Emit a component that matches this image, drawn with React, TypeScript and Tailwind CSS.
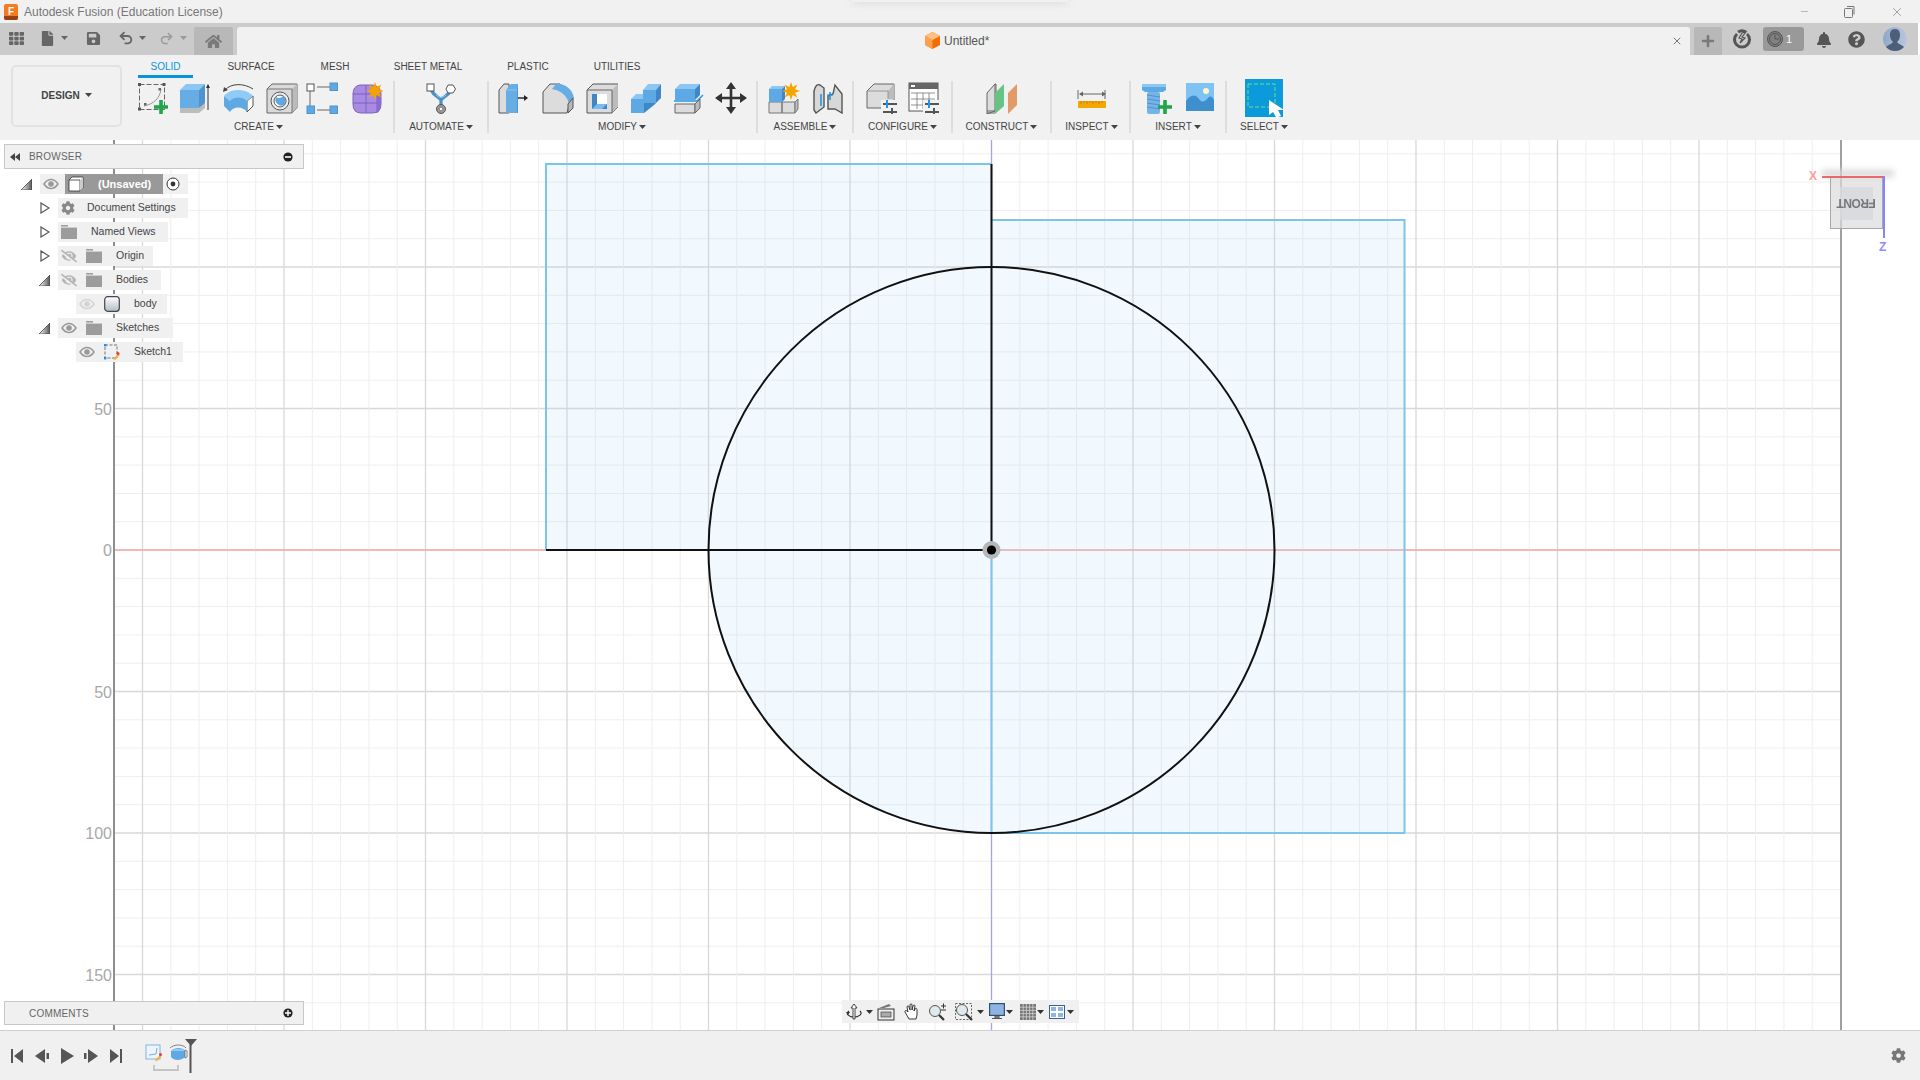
import React from "react";
import { FaBell, FaCog, FaEyeSlash, FaFile, FaHome, FaPlus, FaQuestionCircle, FaSave, FaTh } from "react-icons/fa";
import { Undo2, Redo2, X, Minus } from "lucide-react";

const Caret = ({ c = "#444" }: { c?: string }) => (
  <svg width="7" height="4" viewBox="0 0 7 4" className="shrink-0"><path d="M0 0h7L3.5 4z" fill={c} /></svg>
);

const I = ({ children, w = 32, h = 32 }: { children: React.ReactNode; w?: number; h?: number }) => (
  <svg width={w} height={h} viewBox={`0 0 ${w} ${h}`} className="shrink-0">{children}</svg>
);

const star = (cx: number, cy: number, r: number) => {
  const pts: string[] = [];
  for (let i = 0; i < 16; i++) {
    const a = (i * Math.PI) / 8;
    const rr = i % 2 === 0 ? r : r * 0.48;
    pts.push(`${(cx + rr * Math.sin(a)).toFixed(1)},${(cy - rr * Math.cos(a)).toFixed(1)}`);
  }
  return <polygon points={pts.join(" ")} fill="#f5a300" />;
};

const GreenPlus = ({ x, y, s = 14 }: { x: number; y: number; s?: number }) => (
  <path d={`M${x - s / 2} ${y}h${s}M${x} ${y - s / 2}v${s}`} stroke="#1fa64a" strokeWidth="3.6" />
);

const SketchIcon = () => (
  <I>
    <rect x="2.500" y="2.500" width="25" height="25" fill="none" stroke="#666" strokeWidth="1" strokeDasharray="5 2" />
    <path d="M7 24C17 22 23 16 24 7" fill="none" stroke="#999" strokeWidth="1" />
    {[[1, 1], [25.5, 1], [1, 25.5]].map(([x, y]) => <rect key={x * 10 + y} x={x} y={y} width="3" height="3" fill="#555" />)}
    <rect x="7" y="21" width="2.500" height="2.500" fill="#666" />
    <rect x="21.500" y="6" width="2.500" height="2.500" fill="#666" />
    <GreenPlus x={24} y={25} />
  </I>
);
const ExtrudeIcon = () => (
  <I>
    <path d="M1 26h19l6-5v5l-6 5H1z" fill="#bcbcbc" />
    <path d="M1 8h19v18H1z" fill="#66ade6" />
    <path d="M1 8l6-6h19l-6 6z" fill="#8cc6f2" />
    <path d="M20 8l6-6v19l-6 5z" fill="#4f93cf" />
    <path d="M29 28V3" stroke="#333" strokeWidth="1" />
    <path d="M27 6l2-4 2 4z" fill="#333" />
  </I>
);
const RevolveIcon = () => (
  <I>
    <path d="M2 8C8 1 21 1 30 7" fill="none" stroke="#444" strokeWidth="1" />
    <path d="M0 10l1-5 4 3z" fill="#444" />
    <path d="M24 19l6-5v10l-6 6z" fill="#fff" stroke="#555" strokeWidth="1" />
    <path d="M1 14C7 6 23 6 30 14l-6 5C20 14 10 14 7 19z" fill="#8fcbf6" />
    <path d="M7 19C10 14 20 14 24 19v11C20 24 10 24 7 30l-6-6V14z" fill="#5ea8e4" />
  </I>
);
const HoleIcon = () => (
  <I>
    <path d="M1 7l5-5h25v24l-5 5H1z" fill="#dadada" stroke="#666" strokeWidth="1" />
    <path d="M26 7l5-5v24l-5 5z" fill="#bbb" />
    <path d="M1 7h25v24" fill="none" stroke="#777" strokeWidth="1" />
    <circle cx="14" cy="19" r="9" fill="#eee" stroke="#555" strokeWidth="1" />
    <circle cx="14" cy="19" r="6" fill="#fff" stroke="#555" strokeWidth="1" />
    <path d="M10 15a6 6 0 0 0 8 8 6 6 0 0 0 -1-9 5 5 0 0 1-7 1z" fill="#5ea8e4" />
  </I>
);
const PatternIcon = () => (
  <I>
    <path d="M11 5h13M4 9v15M11 28h13" stroke="#666" strokeWidth="1" />
    <rect x="1" y="2" width="7" height="7" fill="#fff" stroke="#555" />
    <rect x="24" y="1" width="7.5" height="7.5" fill="#5ea8e4" stroke="#4f93cf" />
    <rect x="1" y="24" width="7.5" height="7.5" fill="#5ea8e4" stroke="#4f93cf" />
    <rect x="24" y="24" width="7.5" height="7.5" fill="#5ea8e4" stroke="#4f93cf" />
  </I>
);
const FormIcon = () => (
  <I>
    <path d="M2 12Q2 4 9 3h12q9 1 9 9v10q0 9-9 9H10q-8 0-8-9z" fill="#a98ce2" stroke="#7e5fc4" strokeWidth="1" />
    <path d="M2 12h26M2 21h24M15 3v28M26 12v19" stroke="#7e5fc4" strokeWidth="1" fill="none" />
    <path d="M26 10l4 2v11q0 5-4 8z" fill="#8a6bd0" />
    {star(24, 9, 9)}
  </I>
);
const AutomateIcon = () => (
  <I w={34}>
    <path d="M7 8c3 6 8 7 10 10M27 8c-3 6-8 7-10 10M17 16v9" stroke="#4a8fc8" strokeWidth="3.2" fill="none" />
    <path d="M12 13c3 3 7 3 10 0" stroke="#9ac8ea" strokeWidth="1" fill="none" />
    <rect x="3" y="2" width="7" height="7" fill="#fff" stroke="#555" />
    <path d="M24 3l5 0 2.5 4-2.5 4-5 0-2-4z" fill="#fff" stroke="#555" />
    <circle cx="17" cy="27" r="4.5" fill="#9a9a9a" stroke="#555" />
    <circle cx="17" cy="27" r="1.8" fill="#fff" stroke="#555" strokeWidth=".6" />
  </I>
);
const PressPullIcon = () => (
  <I>
    <path d="M1 8l5-6h5v29H1z" fill="#dcdcdc" stroke="#555" strokeWidth="1" />
    <path d="M8 8l5-6h7v29H8z" fill="#66ade6" />
    <path d="M20 2l-1 7v22h1z" fill="#4f93cf" />
    <path d="M8 8h11" stroke="#8cc6f2" strokeWidth="1" />
    <path d="M20 16h8" stroke="#222" strokeWidth="1.4" />
    <path d="M26 13l4 3-4 3z" fill="#222" />
  </I>
);
const FilletIcon = () => (
  <I>
    <path d="M1 10l7-8h10l12 12-1 3-4 14H1z" fill="#dcdcdc" stroke="#555" strokeWidth="1" />
    <path d="M14 2h5C26 4 31 9 32 16l-5 6c-1-6-6-12-13-14l-4-1z" fill="#66ade6" />
    <path d="M26 22l5-6v10l-5 5z" fill="#b8b8b8" stroke="#555" strokeWidth="1" />
  </I>
);
const ShellIcon = () => (
  <I>
    <path d="M1 8l6-6h25v23l-6 6H1z" fill="#dcdcdc" stroke="#555" strokeWidth="1" />
    <path d="M26 8l6-6v23l-6 6z" fill="#bcbcbc" />
    <path d="M1 8h25v23" fill="none" stroke="#666" strokeWidth="1" />
    <rect x="6" y="12" width="15" height="15" fill="#fff" />
    <path d="M6 12h5v10h10v5H6z" fill="#3f86c6" />
    <path d="M11 22h10l-5 5H6z" fill="#78bcf0" />
  </I>
);
const CombineIcon = () => (
  <I>
    <path d="M13 8l5-6h13l-5 6z" fill="#8cc6f2" />
    <path d="M13 8h13v13H14v10H1V17h12z" fill="#5ea8e4" />
    <path d="M26 8l5-6v14l-5 5z" fill="#3f86c6" />
    <path d="M1 17l5-5h7v5z" fill="#8cc6f2" />
    <path d="M14 21h12l5-5-7 7-10 8z" fill="#3f86c6" />
  </I>
);
const OffsetIcon = () => (
  <I>
    <path d="M3 7l5-5h20l-5 5z" fill="#8cc6f2" />
    <path d="M3 7h20v11H3z" fill="#5ea8e4" />
    <path d="M23 7l5-5v11l-5 5z" fill="#3f86c6" />
    <path d="M2 19h23l6-6" stroke="#2196e8" strokeWidth="1.4" fill="none" />
    <path d="M3 22h20v9H3z" fill="#dcdcdc" stroke="#666" strokeWidth="1" />
    <path d="M23 22l5-5v9l-5 5z" fill="#bcbcbc" stroke="#666" strokeWidth="1" />
  </I>
);
const MoveIcon = () => (
  <I>
    <path d="M16 4v24M4 16h24" stroke="#333" strokeWidth="2.6" />
    <path d="M16 0l5 7H11zM16 32l5-7H11zM0 16l7-5v10zM32 16l-7-5v10z" fill="#333" />
  </I>
);
const ComponentIcon = () => (
  <I>
    <path d="M1 20h13v11H1zM14 20h13v11H14z" fill="#dcdcdc" stroke="#777" strokeWidth="1" />
    <path d="M27 20l3-3v10l-3 4z" fill="#bcbcbc" stroke="#777" strokeWidth="1" />
    <path d="M1 7h13v13H1z" fill="#5ea8e4" />
    <path d="M1 7l3-3h13l-3 3z" fill="#8cc6f2" />
    <path d="M14 7l3-3v13l-3 3z" fill="#3f86c6" />
    {star(23, 9, 9)}
  </I>
);
const JointIcon = () => (
  <I>
    <path d="M2 9Q4 1 8 3l4 3v19l-8 6-2-3z" fill="#d8d8d8" stroke="#555" strokeWidth="1.4" />
    <path d="M16 14l5-2 2-9 7 9v19l-7-4h-7z" fill="#d8d8d8" stroke="#555" strokeWidth="1.4" />
    <path d="M9 12v12M18 10v8" stroke="#2196e8" strokeWidth="1.6" />
    <path d="M15 13h6" stroke="#2196e8" strokeWidth="1.2" />
  </I>
);
const Sliders = ({ x = 18, y = 22 }: { x?: number; y?: number }) => (
  <g>
    <path d={`M${x} ${y}h14M${x} ${y + 8}h14`} stroke="#555" strokeWidth="1.8" />
    <path d={`M${x + 4} ${y - 4}v8`} stroke="#2196e8" strokeWidth="2" />
    <path d={`M${x + 9} ${y + 4}v8`} stroke="#555" strokeWidth="2" />
  </g>
);
const ConfigCubeIcon = () => (
  <I>
    <path d="M1 9l7-7h20v24H1z" fill="#dcdcdc" stroke="#666" strokeWidth="1" />
    <path d="M22 9l6-7v15h-6z" fill="#bcbcbc" />
    <path d="M1 9h21v8" fill="none" stroke="#888" strokeWidth=".8" />
    <rect x="15" y="18" width="17" height="14" fill="#f1f1f1" />
    <Sliders x={17} y={22} />
  </I>
);
const ConfigTableIcon = () => (
  <I>
    <rect x="1" y="1" width="29" height="28" fill="#fff" stroke="#555" strokeWidth="1" />
    <rect x="1" y="1" width="29" height="6" fill="#666" />
    <rect x="3" y="3" width="4" height="2" fill="#fff" />
    <path d="M3 11h24M3 17h24M3 23h24M9 11v16M15 11v16M21 11v16" stroke="#777" strokeWidth=".8" />
    <rect x="15" y="18" width="17" height="14" fill="#f1f1f1" />
    <Sliders x={17} y={22} />
  </I>
);
const ConstructIcon = () => (
  <I>
    <path d="M1 11l8-9v27l-8 3z" fill="#dcdcdc" stroke="#666" strokeWidth="1" />
    <path d="M9 2h1v27H1" fill="none" stroke="#666" strokeWidth="1" />
    <path d="M9 11l0 21 9-8V2z" fill="#65c383" />
    <path d="M22 11l9-9v21l-9 9z" fill="#e29a68" />
    <path d="M1 31h8" stroke="#666" strokeWidth="1" />
  </I>
);
const InspectIcon = () => (
  <I>
    <path d="M5 8v9M32 8v9" stroke="#666" strokeWidth="1" transform="translate(-2 0)" />
    <path d="M5 12h25" stroke="#666" strokeWidth="1" />
    <path d="M4 12l4-2.5v5zM31 12l-4-2.5v5z" fill="#666" />
    <rect x="3" y="19" width="28" height="7" fill="#f7a600" />
    <path d="M6 19v3M9 19v2M12 19v3M15 19v2M18 19v3M21 19v2M24 19v3M27 19v2" stroke="#a87000" strokeWidth=".7" />
  </I>
);
const BoltIcon = () => (
  <I>
    <path d="M0 2h24v6l-3 2H3l-3-2z" fill="#5ea8e4" />
    <rect x="0" y="2" width="24" height="3" fill="#8cc6f2" />
    <rect x="5" y="10" width="13" height="22" rx="2" fill="#76b4e6" />
    <path d="M5 13l13 2M5 17l13 2M5 21l13 2M5 25l13 2" stroke="#4f93cf" strokeWidth="1.2" />
    <GreenPlus x={23} y={25} />
  </I>
);
const PictureIcon = () => (
  <I w={30}>
    <rect x="1" y="1" width="28" height="28" fill="#7fc2f4" />
    <path d="M1 29V19c4-6 9-8 13-2 3 4 6 3 9-1 3-3 4-1 6 2v11z" fill="#3f8fcc" />
    <circle cx="21" cy="9" r="3" fill="#fff7c8" />
  </I>
);
const SelectIcon = () => (
  <I w={38} h={38}>
    <rect width="38" height="38" fill="#0b9ada" />
    <rect x="3" y="5" width="27" height="23" fill="none" stroke="#6fe08e" strokeWidth="1" strokeDasharray="4 2" />
    <path d="M24 21l0 15 4-3 3 5h2l3-1-3-6h6z" fill="#fff" />
  </I>
);

const Slot = ({ className, children }: { className: string; children: React.ReactNode }) => (
  <div className={`${className} flex justify-center items-center shrink-0`}>{children}</div>
);

const Group = ({ className, label, labelClass = "", iconsClass = "justify-center", children }: { className: string; label: string; labelClass?: string; iconsClass?: string; children: React.ReactNode }) => (
  <div className={`${className} shrink-0 flex flex-col`}>
    <div className={`h-[40px] flex items-center ${iconsClass}`}>{children}</div>
    <div className={`h-[18px] flex items-center justify-center gap-[2px] text-[10px] leading-none text-[#444] ${labelClass}`}>
      <span>{label}</span><Caret />
    </div>
  </div>
);
const Sep = () => <div className="w-[2px] h-[52px] mt-[3px] bg-[#dddddd] shrink-0" />;

const Tab = ({ className, children }: { className: string; children: React.ReactNode }) => (
  <div className={`${className} h-[23px] pt-[6px] text-center text-[10px] leading-[12px] text-[#444] shrink-0`}>{children}</div>
);

const TitleBar = () => (
  <div className="relative h-[23px] bg-[#f1f1f1] flex items-center shrink-0 overflow-hidden">
    <svg width="14" height="16" viewBox="0 0 14 16" className="ml-[4px] shrink-0">
      <rect width="14" height="16" rx="2" fill="#f47b20" />
      <path d="M0 12h14v2a2 2 0 0 1-2 2H2a2 2 0 0 1-2-2z" fill="#9a3f12" />
      <text x="7" y="10.5" textAnchor="middle" fontSize="10" fontWeight="700" fill="#fff" fontFamily="Liberation Sans, sans-serif">F</text>
    </svg>
    <span className="ml-[6px] text-[12px] text-[#777]">Autodesk Fusion (Education License)</span>
    <Minus size={11} strokeWidth={1} className="text-[#777] ml-[1576px] shrink-0" />
    <svg width="11" height="12" viewBox="0 0 11 12" className="ml-[34px] shrink-0"><rect x=".5" y="2.5" width="8" height="9" rx="1" fill="none" stroke="#777" /><path d="M3 .5h7v8" fill="none" stroke="#777" /></svg>
    <X size={14} strokeWidth={1} className="text-[#666] ml-[35px] shrink-0" />
    <div className="absolute left-[852px] -top-[8px] w-[216px] h-[10px] shadow-[0_2px_8px_rgba(0,0,0,0.08)]" />
  </div>
);

const TabBar = () => (
  <div className="h-[32px] bg-[#cbcbcb] flex shrink-0 w-[1918px] text-[#666]">
    <div className="h-[24px] mt-[3px] flex items-center">
      <FaTh size={15} className="ml-[9px] shrink-0" />
      <FaFile size={15} className="ml-[16px] shrink-0" />
      <div className="ml-[6px]"><Caret c="#666" /></div>
      <FaSave size={15} className="ml-[18px] shrink-0" />
      <Undo2 size={16} strokeWidth={2.8} className="ml-[17px] shrink-0" />
      <div className="ml-[5px]"><Caret c="#666" /></div>
      <Redo2 size={15} strokeWidth={2.4} className="ml-[13px] shrink-0 text-[#999]" />
      <div className="ml-[6px]"><Caret c="#999" /></div>
    </div>
    <div className="ml-[7px] mt-[4px] w-[39px] h-[28px] bg-[#b8b8b8] rounded-t-[2px] flex items-center justify-center shrink-0">
      <FaHome size={17} className="text-[#7a7a7a]" />
    </div>
    <div className="ml-[4px] mt-[4px] w-[1453px] h-[28px] bg-[#f1f1f1] rounded-t-[3px] flex items-center pb-[1px] shrink-0">
      <svg width="15" height="17" viewBox="0 0 15 17" className="ml-[688px] shrink-0">
        <path d="M7.5 0L15 4v9l-7.5 4L0 13V4z" fill="#f36d00" />
        <path d="M7.5 0L15 4l-7.5 4L0 4z" fill="#ffc088" />
        <path d="M0 4l7.5 4v9L0 13z" fill="#ffa04c" />
      </svg>
      <span className="ml-[4px] text-[12px] text-[#555]">Untitled*</span>
      <X size={12} strokeWidth={1.6} className="ml-[682px] shrink-0 text-[#555]" />
    </div>
    <div className="ml-[4px] mt-[4px] w-[28px] h-[28px] bg-[#b8b8b8] rounded-t-[2px] flex items-center justify-center shrink-0">
      <FaPlus size={14} className="text-[#7a7a7a]" />
    </div>
    <svg width="18" height="20" viewBox="0 0 18 20" className="ml-[11px] mt-[6px] shrink-0">
      <path d="M4 5A7.5 7.5 0 1 0 14 5" fill="none" stroke="#555" strokeWidth="3" />
      <path d="M5 3a7.5 7.5 0 0 1 8 0" fill="none" stroke="#555" strokeWidth="3" />
      <path d="M13 3l-4 5 3 1-5 5 2-4-3-1 3-5z" fill="#cbcbcb" stroke="#555" strokeWidth="1.2" />
    </svg>
    <div className="ml-[12px] mt-[4px] w-[41px] h-[24px] bg-[#999999] rounded-[3px] flex items-center shrink-0">
      <svg width="16" height="18" viewBox="0 0 16 18" className="ml-[4px] shrink-0">
        <circle cx="8" cy="9" r="7.5" fill="#808080" stroke="#555" />
        <circle cx="8" cy="9" r="5.5" fill="none" stroke="#555" />
        <path d="M8 5v4h4" fill="none" stroke="#555" />
      </svg>
      <span className="ml-[3px] text-[11px] text-white">1</span>
    </div>
    <FaBell size={16} className="ml-[12px] mt-[9px] shrink-0 text-[#555]" />
    <FaQuestionCircle size={17} className="ml-[16px] mt-[8px] shrink-0 text-[#555]" />
    <svg width="24" height="24" viewBox="0 0 24 24" className="ml-[18px] mt-[4px] shrink-0">
      <defs><linearGradient id="av" x1="0" x2="1"><stop offset="0" stopColor="#8fa8c8" /><stop offset="1" stopColor="#b8c8dc" /></linearGradient></defs>
      <ellipse cx="12" cy="12" rx="12" ry="12" fill="url(#av)" />
      <path d="M12 2c4 0 5 3 5 6s-1 5-3 7c1 2 5 3 7 5-3 3-6 4-9 4s-6-1-9-4c2-2 6-3 7-5-2-2-3-4-3-7s1-6 5-6z" fill="#4c5e78" />
    </svg>
  </div>
);

const Ribbon = () => (
  <div className="h-[85px] bg-[#f1f1f1] flex shrink-0">
    <div className="ml-[11px] mt-[10px] w-[111px] h-[62px] rounded-[5px] border-2 border-[#e2e2e2] flex items-center justify-center gap-[5px] pb-[2px] text-[10px] font-bold text-[#444] shrink-0">
      <span>DESIGN</span><Caret />
    </div>
    <div className="ml-[10px] flex flex-col w-[1170px]">
      <div className="flex h-[23px] pl-[6px]">
        <Tab className="w-[55px] border-b-[3px] border-[#0696d7] !text-[#0696d7]">SOLID</Tab>
        <Tab className="ml-[16px] w-[84px]">SURFACE</Tab>
        <Tab className="w-[84px]">MESH</Tab>
        <Tab className="w-[102px]">SHEET METAL</Tab>
        <Tab className="w-[98px]">PLASTIC</Tab>
        <Tab className="w-[80px]">UTILITIES</Tab>
      </div>
      <div className="flex">
        <Group className="w-[261px]" label="CREATE" labelClass="pr-[8px]" iconsClass="justify-start">
          <Slot className="w-[42px]"><SketchIcon /></Slot>
          <Slot className="w-[42px]"><ExtrudeIcon /></Slot>
          <Slot className="w-[46px]"><RevolveIcon /></Slot>
          <Slot className="w-[40px]"><HoleIcon /></Slot>
          <Slot className="w-[40px]"><PatternIcon /></Slot>
          <Slot className="w-[50px]"><FormIcon /></Slot>
        </Group>
        <Sep />
        <Group className="w-[92px]" label="AUTOMATE"><AutomateIcon /></Group>
        <Sep />
        <Group className="w-[267px]" label="MODIFY" labelClass="pr-[1px]" iconsClass="justify-start pl-[3px]">
          <Slot className="w-[44px]"><PressPullIcon /></Slot>
          <Slot className="w-[44px]"><FilletIcon /></Slot>
          <Slot className="w-[44px]"><ShellIcon /></Slot>
          <Slot className="w-[44px]"><CombineIcon /></Slot>
          <Slot className="w-[40px]"><OffsetIcon /></Slot>
          <Slot className="w-[46px]"><MoveIcon /></Slot>
        </Group>
        <Sep />
        <Group className="w-[94px]" label="ASSEMBLE" iconsClass="justify-start pl-[4px]">
          <Slot className="w-[44px]"><ComponentIcon /></Slot>
          <Slot className="w-[44px]"><JointIcon /></Slot>
        </Group>
        <Sep />
        <Group className="w-[97px]" label="CONFIGURE" iconsClass="justify-start pl-[7px]">
          <Slot className="w-[42px]"><ConfigCubeIcon /></Slot>
          <Slot className="w-[42px]"><ConfigTableIcon /></Slot>
        </Group>
        <Sep />
        <Group className="w-[97px]" label="CONSTRUCT"><ConstructIcon /></Group>
        <Sep />
        <Group className="w-[77px]" label="INSPECT" labelClass="pl-[2px]"><InspectIcon /></Group>
        <Sep />
        <Group className="w-[94px]" label="INSERT" iconsClass="justify-start pl-[6px]">
          <Slot className="w-[42px]"><BoltIcon /></Slot>
          <Slot className="w-[42px]"><PictureIcon /></Slot>
        </Group>
        <Sep />
        <Group className="w-[74px]" label="SELECT"><SelectIcon /></Group>
      </div>
    </div>
  </div>
);

const Scene = () => {
  const ox = 991.5, oy = 550, step = 28.3;
  const vs: number[] = [];
  const hs: number[] = [];
  for (let k = -31; k <= 30; k++) vs.push(k);
  for (let k = -14; k <= 16; k++) hs.push(k);
  return (
    <svg width="1920" height="890" viewBox="0 140 1920 890" className="absolute inset-0">
      {hs.map((k) => {
        const y = oy + k * step;
        return <line key={k} x1="114" x2="1840" y1={y} y2={y} stroke={k % 5 === 0 ? "#d8d8d8" : "#eeeeee"} strokeWidth={k % 5 === 0 ? 1.3 : 1} />;
      })}
      {vs.map((k) => {
        const x = ox + k * step;
        if (x < 115 || x > 1839) return null;
        return <line key={k} x1={x} x2={x} y1="140" y2="1030" stroke={k % 5 === 0 ? "#d8d8d8" : "#eeeeee"} strokeWidth={k % 5 === 0 ? 1.3 : 1} />;
      })}
      <line x1="114" x2="1840" y1="550" y2="550" stroke="#ff8d8d" strokeWidth="1.2" />
      <line x1="991.5" x2="991.5" y1="140" y2="1030" stroke="#a4a4ee" strokeWidth="1.2" />
      <line x1="114" x2="114" y1="140" y2="1030" stroke="#8e8e8e" strokeWidth="2" />
      <line x1="1841" x2="1841" y1="140" y2="1030" stroke="#a0a0a0" strokeWidth="2" />
      <rect x="546" y="164" width="445.5" height="386" fill="#a8d8fa" fillOpacity=".16" />
      <rect x="991.5" y="220" width="413" height="613" fill="#a8d8fa" fillOpacity=".16" />
      <path d="M708.5 550A283 283 0 0 0 991.5 833V550z" fill="#a8d8fa" fillOpacity=".16" />
      <path d="M546 550V164H991.5" fill="none" stroke="#7cc4ea" strokeWidth="2" />
      <path d="M991.5 220H1404.5V833H991.5V550" fill="none" stroke="#7cc4ea" strokeWidth="2" />
      <path d="M546 550H991.5V164" fill="none" stroke="#111" strokeWidth="2" />
      <circle cx="991.5" cy="550" r="283" fill="none" stroke="#111" strokeWidth="2" />
      <circle cx="991.5" cy="550" r="9" fill="#b4b8ba" />
      <circle cx="991.5" cy="550" r="4.6" fill="#000" />
    </svg>
  );
};

const AxisLabel = ({ className, children }: { className: string; children: React.ReactNode }) => (
  <span className={`${className} absolute left-[74px] w-[38px] text-right text-[16px] leading-[16px] text-[#a8a8a8]`}>{children}</span>
);

const Eye = ({ c = "#9a9a9a" }: { c?: string }) => (
  <svg width="16" height="12" viewBox="0 0 16 12" className="shrink-0">
    <path d="M1 6c4-6 10-6 14 0-4 6-10 6-14 0z" fill="none" stroke={c} strokeWidth="1.6" />
    <circle cx="8" cy="6" r="2.8" fill={c} />
  </svg>
);
const EyeOff = () => <FaEyeSlash size={16} className="text-[#b4b4b4] shrink-0" />;
const Folder = () => (
  <svg width="16" height="14" viewBox="0 0 16 14" className="shrink-0">
    <rect width="7" height="1.6" fill="#a0a0a0" />
    <rect y="2.6" width="16" height="11.4" fill="#9c9c9c" />
  </svg>
);
const ArrowOpen = () => (
  <svg width="10" height="12" viewBox="0 0 10 12" className="shrink-0"><path d="M1 1l8 5-8 5z" fill="#fff" stroke="#555" strokeWidth="1.2" /></svg>
);
const ArrowDown = () => (
  <svg width="11" height="11" viewBox="0 0 11 11" className="shrink-0">
    <defs><linearGradient id="ad" x1="0" x2="1"><stop offset="0" stopColor="#fff" /><stop offset="1" stopColor="#555" /></linearGradient></defs>
    <path d="M0 11L11 0v11z" fill="url(#ad)" stroke="#444" strokeWidth=".8" />
  </svg>
);

const Row = ({ lead, arrow, box, children }: { lead: string; arrow?: React.ReactNode; box: string; children: React.ReactNode }) => (
  <div className="flex items-center h-[20px] mb-[4px]">
    <div className={`${lead} flex justify-end items-center pr-[8px] shrink-0`}>{arrow}</div>
    <div className={`${box} h-[20px] bg-[#f0f0f0] flex items-center text-[10.5px] text-[#444] shrink-0`}>{children}</div>
  </div>
);

const BrowserPanel = () => (
  <div className="absolute left-[4px] top-[4px] w-[304px]">
    <div className="w-[300px] h-[25px] bg-[#f0f0f0] border border-[#c8c8c8] flex items-center">
      <svg width="10" height="8" viewBox="0 0 10 8" className="ml-[5px] shrink-0"><path d="M5 0v8L0 4zM10 0v8L5 4z" fill="#444" /></svg>
      <span className="ml-[9px] text-[10px] tracking-[0.2px] text-[#666]">BROWSER</span>
      <svg width="10" height="10" viewBox="0 0 10 10" className="ml-[201px] shrink-0"><circle cx="5" cy="5" r="4.6" fill="#222" /><rect x="2" y="4.2" width="6" height="1.6" fill="#fff" /></svg>
    </div>
    <div className="mt-[5px] -ml-[4px]">
      <Row lead="w-[40px]" arrow={<ArrowDown />} box="w-[148px]">
        <div className="ml-[3px]"><Eye /></div>
        <div className="ml-[6px] w-[98px] h-[20px] bg-[#999999] flex items-center shrink-0">
          <svg width="16" height="16" viewBox="0 0 16 16" className="ml-[3px] shrink-0">
            <path d="M1 4l3-3h11v11l-3 3H1z" fill="#fff" stroke="#333" strokeWidth=".8" />
            <path d="M1 4h11v11" fill="none" stroke="#333" strokeWidth=".8" /><path d="M12 4l3-3v11l-3 3z" fill="#ccc" />
          </svg>
          <span className="ml-[14px] text-[11px] font-bold text-white">(Unsaved)</span>
        </div>
        <svg width="14" height="14" viewBox="0 0 14 14" className="ml-[3px] shrink-0"><circle cx="7" cy="7" r="6" fill="#fff" stroke="#333" /><circle cx="7" cy="7" r="2.4" fill="#333" /></svg>
      </Row>
      <Row lead="w-[58px]" arrow={<ArrowOpen />} box="w-[130px]">
        <FaCog size={14} className="ml-[3px] text-[#888] shrink-0" />
        <span className="ml-[12px]">Document Settings</span>
      </Row>
      <Row lead="w-[58px]" arrow={<ArrowOpen />} box="w-[110px]">
        <div className="ml-[3px]"><Folder /></div>
        <span className="ml-[14px]">Named Views</span>
      </Row>
      <Row lead="w-[58px]" arrow={<ArrowOpen />} box="w-[95px]">
        <div className="ml-[3px]"><EyeOff /></div>
        <div className="ml-[9px]"><Folder /></div>
        <span className="ml-[14px]">Origin</span>
      </Row>
      <Row lead="w-[58px]" arrow={<ArrowDown />} box="w-[103px]">
        <div className="ml-[3px]"><EyeOff /></div>
        <div className="ml-[9px]"><Folder /></div>
        <span className="ml-[14px]">Bodies</span>
      </Row>
      <Row lead="w-[76px]" box="w-[91px]">
        <div className="ml-[3px]"><Eye c="#d4d4d4" /></div>
        <svg width="16" height="16" viewBox="0 0 16 16" className="ml-[9px] shrink-0">
          <defs><linearGradient id="bd" x1="0" x2="0" y1="0" y2="1"><stop offset="0" stopColor="#fff" /><stop offset="1" stopColor="#b4bcc4" /></linearGradient></defs>
          <rect x=".7" y=".7" width="14.6" height="14.6" rx="3" fill="url(#bd)" stroke="#445" strokeWidth="1.2" />
        </svg>
        <span className="ml-[14px]">body</span>
      </Row>
      <Row lead="w-[58px]" arrow={<ArrowDown />} box="w-[115px]">
        <div className="ml-[3px]"><Eye /></div>
        <div className="ml-[9px]"><Folder /></div>
        <span className="ml-[14px]">Sketches</span>
      </Row>
      <Row lead="w-[76px]" box="w-[107px]">
        <div className="ml-[3px]"><Eye /></div>
        <svg width="16" height="16" viewBox="0 0 16 16" className="ml-[9px] shrink-0">
          <rect x="1" y="1" width="12" height="13" fill="none" stroke="#555" strokeWidth=".8" strokeDasharray="3 1.5" />
          <rect x="0" y="0" width="2.4" height="2.4" fill="#1e90e6" /><rect x="0" y="13" width="2.4" height="2.4" fill="#1e90e6" />
          <path d="M9 15l5-5 2 1-5 5z" fill="#f0b43c" /><circle cx="14" cy="9.5" r="1.5" fill="#e8383c" />
        </svg>
        <span className="ml-[14px]">Sketch1</span>
      </Row>
    </div>
  </div>
);

const CommentsPanel = () => (
  <div className="absolute left-[4px] top-[861px] w-[300px] h-[24px] bg-[#f0f0f0] border border-[#c8c8c8] flex items-center">
    <span className="ml-[24px] text-[10px] tracking-[0.2px] text-[#666]">COMMENTS</span>
    <svg width="10" height="10" viewBox="0 0 10 10" className="ml-[194px] shrink-0"><circle cx="5" cy="5" r="4.6" fill="#222" /><path d="M2 5h6M5 2v6" stroke="#fff" strokeWidth="1.4" /></svg>
  </div>
);

const NavBar = () => (
  <div className="absolute left-[842px] top-[860px] w-[237px] h-[23px] bg-[#f0f0f0] flex items-center">
    <svg width="16" height="18" viewBox="0 0 16 18" className="ml-[4px] shrink-0">
      <path d="M3 8c-4 3 0 6 5 6s9-3 6-6" fill="none" stroke="#333" strokeWidth="1.2" /><path d="M0 9l4 0-2 3z" fill="#333" />
      <path d="M8 1l3 4H9v11H7V5H5z" fill="#fff" stroke="#333" strokeWidth=".9" />
    </svg>
    <div className="ml-[4px]"><Caret c="#333" /></div>
    <svg width="18" height="18" viewBox="0 0 18 18" className="ml-[4px] shrink-0">
      <rect x="1" y="6" width="16" height="11" fill="#eee" stroke="#333" /><rect x="4" y="9" width="10" height="5" fill="#aaa" stroke="#444" strokeWidth=".7" />
      <path d="M2 5l10-4 2 2-7 2z" fill="#777" />
    </svg>
    <svg width="18" height="18" viewBox="0 0 18 18" className="ml-[9px] shrink-0">
      <path d="M5 16L1 9c-.5-1.5 1-2 2-1l1 1-1-5c0-1.500 2-1.500 2 0l1 3V2c0-1.500 2-1.500 2 0v5l1-4c.5-1.500 2-1 2 0l-1 5 1-2c.5-1 2-.5 2 .5L13 12l-1 4z" fill="#fff" stroke="#222" strokeWidth=".9" />
    </svg>
    <svg width="18" height="18" viewBox="0 0 18 18" className="ml-[6px] shrink-0">
      <circle cx="7" cy="8" r="5.500" fill="#dfeaee" stroke="#555" /><path d="M11 12l5 5" stroke="#333" strokeWidth="2.2" /><path d="M13 3h5M15.500 .5v5M13 7h5" stroke="#333" strokeWidth="1" />
    </svg>
    <svg width="18" height="18" viewBox="0 0 18 18" className="ml-[9px] shrink-0">
      <rect x=".5" y=".5" width="16" height="16" fill="none" stroke="#666" strokeDasharray="2 1.500" /><circle cx="7" cy="7" r="5.500" fill="#dfeaee" stroke="#555" /><path d="M11 11l6 6" stroke="#333" strokeWidth="2.2" />
    </svg>
    <div className="ml-[4px]"><Caret c="#333" /></div>
    <svg width="16" height="17" viewBox="0 0 16 17" className="ml-[5px] shrink-0">
      <rect x=".6" y=".6" width="14.800" height="11.800" fill="#8db4e2" stroke="#2f4f6f" strokeWidth="1.200" /><path d="M6 13h4v2H6zM3 15.500h10" stroke="#555" fill="#999" />
    </svg>
    <div className="ml-[1px]"><Caret c="#333" /></div>
    <svg width="16" height="16" viewBox="0 0 16 16" className="ml-[7px] shrink-0">
      <rect width="16" height="16" fill="#777" /><path d="M3.200 0v16M6.400 0v16M9.600 0v16M12.800 0v16M0 3.200h16M0 6.400h16M0 9.600h16M0 12.800h16" stroke="#ddd" strokeWidth=".7" />
    </svg>
    <div className="ml-[1px]"><Caret c="#333" /></div>
    <svg width="16" height="14" viewBox="0 0 16 14" className="ml-[5px] shrink-0">
      <rect x=".5" y=".5" width="15" height="13" fill="#fff" stroke="#3a5f8a" /><rect x="2" y="2" width="5" height="4" fill="#8db4e2" /><rect x="9" y="2" width="5" height="4" fill="#8db4e2" /><rect x="2" y="8" width="5" height="4" fill="#8db4e2" /><rect x="9" y="8" width="5" height="4" fill="#8db4e2" />
    </svg>
    <div className="ml-[2px]"><Caret c="#333" /></div>
  </div>
);

const ViewCube = () => (
  <div className="absolute left-[1810px] top-[28px] w-[90px] h-[90px]">
    <div className="absolute left-[12px] top-[2px] w-[72px] h-[7px] bg-[#d8d8d8] blur-[3px]" />
    <div className="absolute left-[20px] top-[9px] w-[53px] h-[52px] bg-[#dcdcdc]/70 border border-[#a8a8a8] flex items-center justify-center">
      <div className="w-[33px] h-[33px] bg-[#d6d8dc]/80 flex items-center justify-center">
        <span className="rotate-180 text-[12px] font-bold text-[#777] tracking-[-0.5px]">FRONT</span>
      </div>
    </div>
    <div className="absolute left-[12px] top-[8px] w-[62px] h-[2px] bg-[#e66a6a]" />
    <div className="absolute left-[73px] top-[8px] w-[2px] h-[62px] bg-[#8484ff]" />
    <span className="absolute left-[-1px] top-[1px] text-[12px] font-bold leading-[14px] text-[#ff9a9a]">X</span>
    <span className="absolute left-[69px] top-[72px] text-[12px] font-bold leading-[14px] text-[#8c8cff]">Z</span>
  </div>
);

const Timeline = () => (
  <div className="h-[50px] bg-[#f0f0f0] border-t border-[#cfcfcf] flex items-center shrink-0 text-[#555]">
    <svg width="12" height="14" viewBox="0 0 12 14" className="ml-[11px] shrink-0"><path d="M0 0h2v14H0zM12 0v14L3 7z" fill="#555" /></svg>
    <svg width="14" height="14" viewBox="0 0 14 14" className="ml-[12px] shrink-0"><path d="M10 0v14L0 7zM11.500 4H14v6h-2.500z" fill="#555" /></svg>
    <svg width="14" height="16" viewBox="0 0 14 16" className="ml-[11px] shrink-0"><path d="M1 0l13 8-13 8z" fill="#555" /></svg>
    <svg width="14" height="14" viewBox="0 0 14 14" className="ml-[10px] shrink-0"><path d="M4 0v14l10-7zM0 4h2.500v6H0z" fill="#555" /></svg>
    <svg width="12" height="14" viewBox="0 0 12 14" className="ml-[12px] shrink-0"><path d="M0 0v14l9-7zM10 0h2v14h-2z" fill="#555" /></svg>
    <svg width="62" height="36" viewBox="0 0 62 36" className="ml-[22px] shrink-0">
      <rect x="2" y="7" width="14" height="14" fill="#eef4fa" stroke="#7ab4e4" />
      <path d="M5 17l7-1 1-6" fill="none" stroke="#5a9ad4" strokeWidth=".8" />
      <path d="M11 22l5-5 1.500 1.500-5 5z" fill="#f0b43c" /><circle cx="16.500" cy="16.500" r="1.500" fill="#e8383c" />
      <path d="M27 13c3-4 12-4 14 0v6c-4 4-11 4-14 0z" fill="#5ea8e4" />
      <path d="M27 13c3-3 11-3 14 0" fill="#8fcbf6" />
      <path d="M26 10c4-4 13-4 16 0" fill="none" stroke="#666" strokeWidth=".8" />
      <path d="M41 12l2 1v6l-2 1z" fill="#fff" stroke="#666" strokeWidth=".8" />
      <path d="M10 27v5h24v-5" fill="none" stroke="#c4c4c4" strokeWidth="1.800" />
      <rect x="45.500" y="6" width="2" height="29" fill="#555" />
      <path d="M41 1h12l-6 7z" fill="#555" />
    </svg>
    <FaCog size={15} className="ml-[1685px] shrink-0 text-[#777]" />
  </div>
);

export default function App() {
  return (
    <div className="w-[1920px] h-[1080px] flex flex-col overflow-hidden bg-white font-['Liberation_Sans',Arial,sans-serif]">
      <TitleBar />
      <TabBar />
      <Ribbon />
      <div className="relative flex-1 bg-white overflow-hidden">
        <Scene />
        <AxisLabel className="top-[262px]">50</AxisLabel>
        <AxisLabel className="top-[403px]">0</AxisLabel>
        <AxisLabel className="top-[545px]">50</AxisLabel>
        <AxisLabel className="top-[686px]">100</AxisLabel>
        <AxisLabel className="top-[828px]">150</AxisLabel>
        <BrowserPanel />
        <CommentsPanel />
        <NavBar />
        <ViewCube />
      </div>
      <Timeline />
    </div>
  );
}
